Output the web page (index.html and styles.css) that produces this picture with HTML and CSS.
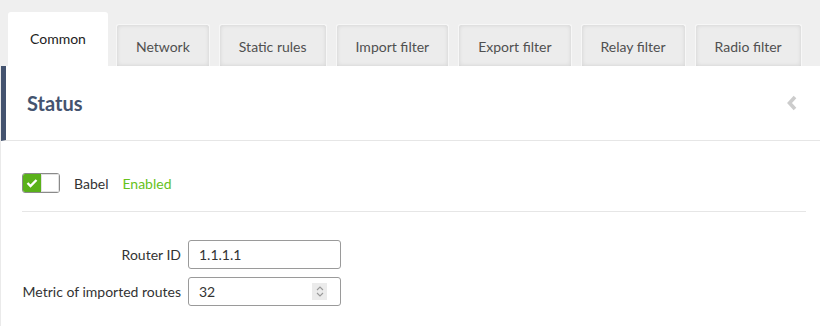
FILE: index.html
```html
<!DOCTYPE html>
<html>
<head>
<meta charset="utf-8">
<link rel="stylesheet" href="styles.css">
</head>
<body>
<div class="tabs">
  <div class="tab active">Common</div>
  <div class="tab">Network</div>
  <div class="tab">Static rules</div>
  <div class="tab">Import filter</div>
  <div class="tab">Export filter</div>
  <div class="tab">Relay filter</div>
  <div class="tab">Radio filter</div>
</div>
<div class="panel">
  <div class="panel-head">
    <h2 class="title">Status</h2>
    <svg class="chev" width="12" height="16" viewBox="0 0 12 16"><polyline points="9,2 3.5,8 9,14" fill="none" stroke="#cccccc" stroke-width="3.6"/></svg>
  </div>
  <div class="panel-body">
    <div class="status-row">
      <div class="toggle">
        <div class="toggle-on"><svg width="12" height="10" viewBox="0 0 12 10"><polyline points="1.5,5 4.5,8 10.5,2" fill="none" stroke="#fff" stroke-width="2.4"/></svg></div>
        <div class="toggle-knob"></div>
      </div>
      <span class="name">Babel</span>
      <span class="state">Enabled</span>
    </div>
    <div class="form">
      <label class="lbl">Router ID</label>
      <div class="input">1.1.1.1</div>
      <label class="lbl">Metric of imported routes</label>
      <div class="input">32<span class="spin"><svg width="8" height="13" viewBox="0 0 8 13"><polyline points="1,5 4,2 7,5" fill="none" stroke="#999" stroke-width="1.1"/><polyline points="1,8 4,11 7,8" fill="none" stroke="#999" stroke-width="1.1"/></svg></span></div>
    </div>
  </div>
</div>
</body>
</html>
```
FILE: styles.css
```css
html, body {
  margin: 0;
  padding: 0;
}
body {
  background: #efefef;
  font-family: Lato, "Liberation Sans", sans-serif;
  font-size: 14px;
  color: #333;
  width: 820px;
  height: 326px;
  overflow: hidden;
}
.tabs {
  display: flex;
  align-items: flex-end;
  gap: 9px;
  padding: 12px 0 0 8px;
  height: 54px;
  box-sizing: content-box;
}
.tab {
  height: 42px;
  box-sizing: border-box;
  padding: 13px 19px 0;
  background: #ececec;
  border: 1px solid #f7f7f7;
  border-bottom: none;
  border-radius: 3px 3px 0 0;
  box-shadow: inset 0 0 4px rgba(0,0,0,0.12);
  color: #505050;
  white-space: nowrap;
}
.tab.active {
  height: 54px;
  padding: 18px 22px 0;
  background: #fff;
  border: none;
  box-shadow: none;
  color: #222;
  margin-right: -1px;
}
.panel {
  background: #fff;
  height: 260px;
  border-left: 1px solid #eaeaea;
}
.panel-head {
  display: flex;
  align-items: center;
  justify-content: space-between;
  height: 75px;
  box-sizing: border-box;
  border-left: 5px solid #44536f;
  border-bottom: 1px solid #e6e6e6;
  padding: 0 22px 0 21px;
}
.title {
  margin: 0;
  font-size: 20px;
  font-weight: 700;
  color: #44536f;
}
.chev {
  display: block;
}
.panel-body {
  padding: 32px 14px 0 21px;
}
.status-row {
  display: flex;
  align-items: center;
  height: 20px;
  padding-bottom: 18px;
  border-bottom: 1px solid #e6e6e6;
}
.toggle {
  display: flex;
  width: 38px;
  height: 20px;
  box-sizing: border-box;
  border: 1px solid #8a8a8a;
  border-radius: 3px;
  overflow: hidden;
}
.toggle-on {
  width: 18px;
  background: #5ab11a;
  display: flex;
  align-items: center;
  justify-content: center;
}
.toggle-knob {
  flex: 1;
  background: #fff;
  border: 1px solid #e2e2e2;
}
.name {
  margin-left: 14px;
  color: #333;
}
.state {
  margin-left: 14px;
  color: #66c21c;
}
.form {
  display: grid;
  grid-template-columns: 159px 153px;
  column-gap: 7px;
  row-gap: 8px;
  align-items: center;
  padding-top: 28px;
}
.lbl {
  text-align: right;
  color: #333;
  white-space: nowrap;
}
.input {
  position: relative;
  height: 29px;
  box-sizing: border-box;
  border: 1px solid #9a9a9a;
  border-radius: 3px;
  padding: 0 10px;
  line-height: 27px;
  color: #333;
}
.spin {
  position: absolute;
  right: 13px;
  top: 5px;
  width: 15px;
  height: 17px;
  background: #ebebeb;
  display: flex;
  align-items: center;
  justify-content: center;
}
```
